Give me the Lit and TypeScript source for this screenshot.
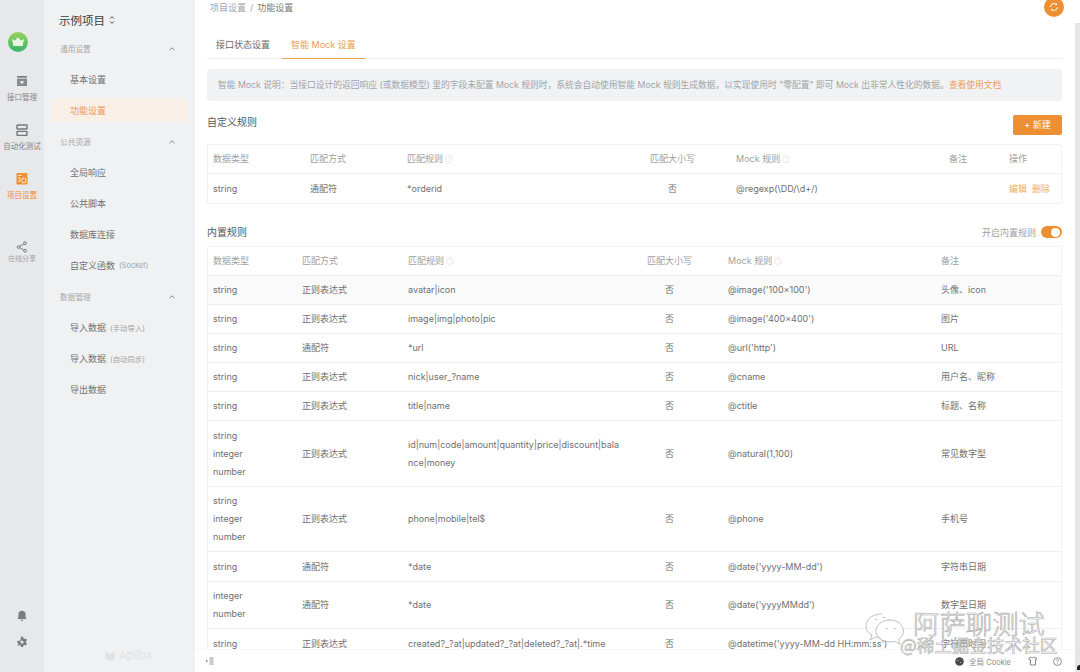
import { LitElement, html, css, svg } from "lit";
import { customElement } from "lit/decorators.js";

const ORANGE = "#ee8f33";

const info = html`<svg class="info" viewBox="0 0 8 8" width="8" height="8"><circle cx="4" cy="4" r="3.4" fill="none" stroke="#e2e2e2" stroke-width=".8" /><path d="M3.2 3.2a.8.8 0 1 1 1.2.7c-.3.2-.4.3-.4.6M4 5.6v.4" fill="none" stroke="#e2e2e2" stroke-width=".6" /></svg>`;

const chevron = html`<svg class="chev" viewBox="0 0 8 6" width="8" height="6"><path d="M1.5 4.2 4 1.8l2.5 2.4" fill="none" stroke="#888" stroke-width="1" /></svg>`;

const groups = [
  { label: "通用设置", items: [{ t: "基本设置" }, { t: "功能设置", on: true }] },
  { label: "公共资源", items: [{ t: "全局响应" }, { t: "公共脚本" }, { t: "数据库连接" }, { t: "自定义函数", s: "(Socket)" }] },
  { label: "数据管理", items: [{ t: "导入数据", s: "(手动导入)" }, { t: "导入数据", s: "(自动同步)" }, { t: "导出数据" }] },
];

const REGEX = "正则表达式";
const rows = [
  { h: 29, type: "string", how: REGEX, rule: "avatar|icon", mock: "@image('100x100')", note: "头像、icon", hover: true },
  { h: 29, type: "string", how: REGEX, rule: "image|img|photo|pic", mock: "@image('400x400')", note: "图片" },
  { h: 29, type: "string", how: "通配符", rule: "*url", mock: "@url('http')", note: "URL" },
  { h: 29, type: "string", how: REGEX, rule: "nick|user_?name", mock: "@cname", note: "用户名、昵称" },
  { h: 29, type: "string", how: REGEX, rule: "title|name", mock: "@ctitle", note: "标题、名称" },
  { h: 66, type: "string\ninteger\nnumber", how: REGEX, rule: "id|num|code|amount|quantity|price|discount|bala\nnce|money", mock: "@natural(1,100)", note: "常见数字型" },
  { h: 65, type: "string\ninteger\nnumber", how: REGEX, rule: "phone|mobile|tel$", mock: "@phone", note: "手机号" },
  { h: 30, type: "string", how: "通配符", rule: "*date", mock: "@date('yyyy-MM-dd')", note: "字符串日期" },
  { h: 47, type: "integer\nnumber", how: "通配符", rule: "*date", mock: "@date('yyyyMMdd')", note: "数字型日期" },
  { h: 29, type: "string", how: REGEX, rule: "created?_?at|updated?_?at|deleted?_?at|.*time", mock: "@datetime('yyyy-MM-dd HH:mm:ss')", note: "字符串时间" },
];

@customElement("app-root")
export class AppRoot extends LitElement {
  static styles = css`
    :host {
      display: block;
      width: 1080px;
      height: 672px;
      position: relative;
      overflow: hidden;
      background: #fff;
      font-family: Inter, "Noto Sans CJK SC", sans-serif;
      font-size: 9px;
      color: #6f6f6f;
    }
    .app { display: flex; height: 100%; }

    .rail {
      width: 44px;
      flex: none;
      background: #e7e8ea;
      display: flex;
      flex-direction: column;
      align-items: center;
      padding-top: 32px;
      box-sizing: border-box;
      font-size: 7.5px;
    }
    .logo { display: block; margin-left: -9px; margin-bottom: 23px; }
    .rail-item {
      display: flex;
      flex-direction: column;
      align-items: center;
      height: 29px;
      margin-bottom: 20px;
      white-space: nowrap;
      line-height: 12px;
      color: #868686;
    }
    .rail-item svg { margin-bottom: 5px; display: block; }
    .rail-item.on { color: ${css([ORANGE] as unknown as TemplateStringsArray)}; }
    .rail-item.share { margin-top: 19px; color: #a5a5a5; font-size: 7px; }
    .rail-item.share svg { margin-bottom: 0; }
    .rail-bottom { margin-top: auto; padding-bottom: 24px; display: flex; flex-direction: column; gap: 14px; }
    .rail-bottom svg { display: block; }

    .side {
      width: 151px;
      flex: none;
      box-sizing: border-box;
      background: #f0f1f3;
      padding: 7px 8px 0;
      display: flex;
      flex-direction: column;
    }
    .title {
      height: 26px;
      display: flex;
      align-items: center;
      gap: 4px;
      padding-left: 7px;
      font-size: 11.5px;
      color: #3d3d3d;
    }
    .group {
      height: 31px;
      display: flex;
      align-items: center;
      justify-content: space-between;
      padding: 0 11px 0 8px;
      font-size: 7.7px;
      color: #a8a8a8;
    }
    .item {
      height: 31px;
      display: flex;
      align-items: center;
      gap: 4px;
      padding-left: 18px;
      color: #727272;
      white-space: nowrap;
    }
    .item small { font-size: 7.4px; color: #a3a3a3; }
    .item.on { color: #ee9d55; position: relative; z-index: 0; }
    .item.on::before {
      content: "";
      position: absolute;
      inset: 3px 0 4px;
      border-radius: 3px;
      background: #f8efe6;
      z-index: -1;
    }
    .brand {
      margin-top: auto;
      margin-bottom: 10px;
      display: flex;
      align-items: center;
      justify-content: center;
      gap: 3px;
      padding-left: 17px;
      font-size: 11px;
      color: #e0e1e3;
    }

    .main { flex: 1; min-width: 0; display: flex; flex-direction: column; }
    .content { flex: 1; min-height: 0; overflow: hidden; padding: 0 18px 0 12px; }
    .crumb { height: 16px; line-height: 16px; padding-left: 3px; color: #a5a5a5; }
    .crumb b { font-weight: 400; color: #7a7a7a; }
    .crumb i { font-style: normal; margin: 0 4px; }

    .tabs { display: flex; gap: 3px; height: 42px; align-items: flex-end; border-bottom: 1px solid #f1f1f1; box-sizing: content-box; }
    .tab { height: 28px; line-height: 29px; padding: 0 9px; box-sizing: border-box; color: #6a6a6a; white-space: nowrap; }
    .tab.on { color: #ee9d55; border-bottom: 1px solid #ee9d55; height: 29px; margin-bottom: -1px; }

    .notice {
      margin-top: 10px;
      height: 32px;
      line-height: 32px;
      border-radius: 3px;
      background: #f0f2f4;
      padding: 0 11px;
      font-size: 8.75px;
      color: #a2a5a8;
      white-space: nowrap;
      overflow: hidden;
    }
    .notice a { color: #ee9d55; }

    .head { display: flex; justify-content: space-between; align-items: flex-start; margin-top: 14px; height: 20px; }
    .head h3 { margin: 0; font-weight: 400; font-size: 10px; line-height: 14px; color: #555; }
    .add {
      width: 49px;
      height: 20px;
      border-radius: 2px;
      background: #ee8f33;
      color: #fff;
      text-align: center;
      line-height: 20px;
    }
    .head.second { margin-top: 20px; height: 16px; align-items: center; }
    .head.second h3 { line-height: 16px; }
    .switch-row { display: flex; align-items: center; gap: 5px; color: #a3a3a3; }
    .switch { width: 21px; height: 12px; border-radius: 6px; background: #ee8f33; position: relative; }
    .switch::after {
      content: "";
      position: absolute;
      right: 2px;
      top: 1.5px;
      width: 9px;
      height: 9px;
      border-radius: 50%;
      background: #fff;
    }

    table {
      width: 100%;
      table-layout: fixed;
      border-collapse: separate;
      border-spacing: 0;
      border: 1px solid #f1f1f1;
      border-radius: 2px;
      box-sizing: border-box;
    }
    table.custom { margin-top: 9px; }
    table.builtin { margin-top: 6px; }
    th, td {
      padding: 0 0 0 5px;
      border-bottom: 1px solid #f0f0f0;
      height: 29px;
      box-sizing: border-box;
      font-weight: 400;
      text-align: left;
      line-height: 18px;
      white-space: pre-line;
    }
    tr:last-child td { border-bottom: 0; }
    th { color: #a0a0a0; }
    .case { display: inline-block; width: 45px; text-align: center; white-space: nowrap; }
    .info { vertical-align: -1px; margin-left: 2px; }
    tr.hover td { background: #fafafa; }
    .ops { color: #f0ab6b; }
    .ops span + span { margin-left: 5px; }

    .foot {
      height: 23px;
      flex: none;
      background: #fff;
      border-top: 1px solid #f6f6f6;
      box-sizing: border-box;
      display: flex;
      align-items: center;
      padding: 0 18px 0 11px;
      font-size: 7.5px;
      color: #8a8a8a;
      gap: 3px;
    }
    .foot svg { display: block; }
    .foot .cookie { margin-left: auto; }
    .foot .shirt { margin-left: 14px; }
    .foot .help { margin-left: 13px; }

    .sync {
      position: absolute;
      left: 1044px;
      top: -3px;
      width: 20px;
      height: 20px;
      border-radius: 50%;
      background: #ee8f33;
      display: flex;
      align-items: center;
      justify-content: center;
    }
    .scroll { position: absolute; right: 0; top: 23px; bottom: 0; width: 5px; background: #e6e6e6; }
    .corner { position: absolute; right: 0; bottom: 2px; width: 3px; height: 5px; background: #222; border-radius: 3px 0 0 0; }

    .mark { position: absolute; left: 864px; top: 608px; width: 200px; height: 50px; pointer-events: none; }
    .mark svg { position: absolute; left: 0; top: 0; }
    .mark div {
      position: absolute;
      white-space: nowrap;
      color: rgba(255, 255, 255, .75);
      -webkit-text-stroke: .6px #a9a9a9;
      font-family: "Noto Sans CJK SC", sans-serif;
    }
    .mark .a { left: 49px; top: -1px; font-size: 26.4px; line-height: 32px; font-weight: 300; }
    .mark .b { left: 36px; top: 26px; font-size: 17.6px; line-height: 22px; }
  `;

  railIcons = {
    api: svg`<rect x="1" y="1" width="10" height="1.6" fill="#777"/><rect x="1" y="3.6" width="10" height="7.4" fill="#8a8a8a"/><rect x="4.5" y="6" width="3" height="2.4" fill="#e7e8ea"/>`,
    test: svg`<rect x="1" y="1" width="10" height="4" rx=".6" fill="none" stroke="#777" stroke-width="1.4"/><rect x="1" y="7.4" width="10" height="4" rx=".6" fill="none" stroke="#777" stroke-width="1.4"/>`,
    proj: svg`<rect x=".5" y="0" width="11" height="11.5" rx="1" fill="#ee8f33"/><path d="M2 2.4h4M2 5h2v3.2H2M6 5.4h3.6v4.2H6z" fill="none" stroke="#fbe3c9" stroke-width="1"/>`,
    share: svg`<g fill="none" stroke="#6f6f6f" stroke-width=".9"><circle cx="9" cy="2.2" r="1.4"/><circle cx="2.6" cy="6" r="1.4"/><circle cx="9" cy="9.8" r="1.4"/><path d="M3.9 5.2 7.7 3M3.9 6.8l3.8 2.2"/></g>`,
  };

  renderRail() {
    const icon = (s: unknown) => html`<svg viewBox="0 0 12 12" width="12" height="12">${s}</svg>`;
    return html`<nav class="rail">
      <svg class="logo" viewBox="0 0 20 20" width="20" height="20">
        <defs><linearGradient id="lg" x1="0" y1="0" x2="0" y2="1"><stop offset="0" stop-color="#9ad35a" /><stop offset="1" stop-color="#35b46a" /></linearGradient></defs>
        <circle cx="10" cy="10" r="10" fill="url(#lg)" />
        <path d="M4 7l3.2 1.6L10 5l2.8 3.6L16 7l-1.4 7H5.4z" fill="#e8f3e2" />
      </svg>
      <div class="rail-item">${icon(this.railIcons.api)}接口管理</div>
      <div class="rail-item">${icon(this.railIcons.test)}自动化测试</div>
      <div class="rail-item on">${icon(this.railIcons.proj)}项目设置</div>
      <div class="rail-item share">${icon(this.railIcons.share)}在线分享</div>
      <div class="rail-bottom">
        <svg viewBox="0 0 12 12" width="12" height="12"><path d="M6 .8a3.6 3.6 0 0 0-3.6 3.6v2.8L1.4 9h9.2l-1-1.8V4.4A3.6 3.6 0 0 0 6 .8zM4.8 9.8a1.2 1.2 0 0 0 2.4 0z" fill="#7c7c7c" /></svg>
        <svg viewBox="0 0 12 12" width="12" height="12"><path d="M4.9.8h2.2l.3 1.5 1 .6 1.5-.5 1.1 1.9-1.1 1v1.2l1.1 1-1.1 1.9-1.5-.5-1 .6-.3 1.5H4.9l-.3-1.5-1-.6-1.5.5L1 9.5l1.1-1V7.3L1 6.300 2.100 4.400l1.500.500 1-.600zM6 4.500a1.600 1.600 0 1 0 0 3.200 1.600 1.600 0 0 0 0-3.200z" fill="#7c7c7c" fill-rule="evenodd" /></svg>
      </div>
    </nav>`;
  }

  renderSide() {
    return html`<aside class="side">
      <div class="title">示例项目
        <svg viewBox="0 0 6 10" width="6" height="10"><path d="M1 3.600 3 1.600l2 2M1 6.400l2 2 2-2" fill="none" stroke="#444" stroke-width=".9" /></svg>
      </div>
      ${groups.map(
        (g) => html`<div class="group">${g.label}${chevron}</div>
          ${g.items.map(
            (i: { t: string; s?: string; on?: boolean }) =>
              html`<div class="item ${i.on ? "on" : ""}">${i.t}${i.s ? html`<small>${i.s}</small>` : ""}</div>`
          )}`
      )}
      <div class="brand">
        <svg viewBox="0 0 12 12" width="12" height="12"><path d="M1 2.500c1.500 1.500 3 2 5 2s3.500-.5 5-2v4.500a5 5 0 0 1-10 0z" fill="#e0e1e3" /></svg>
        Apifox
      </div>
    </aside>`;
  }

  renderCustom() {
    return html`<table class="custom">
      <colgroup><col style="width:97px" /><col style="width:97px" /><col style="width:243px" /><col style="width:86px" /><col style="width:213px" /><col style="width:60px" /><col /></colgroup>
      <tr><th>数据类型</th><th>匹配方式</th><th>匹配规则${info}</th><th><span class="case">匹配大小写</span></th><th>Mock 规则${info}</th><th>备注</th><th>操作</th></tr>
      <tr><td>string</td><td>通配符</td><td>*orderid</td><td><span class="case">否</span></td><td>@regexp(\\DD/\\d+/)</td><td></td><td class="ops"><span>编辑</span><span>删除</span></td></tr>
    </table>`;
  }

  renderBuiltin() {
    return html`<table class="builtin">
      <colgroup><col style="width:89px" /><col style="width:106px" /><col style="width:239px" /><col style="width:81px" /><col style="width:213px" /><col /></colgroup>
      <tr><th>数据类型</th><th>匹配方式</th><th>匹配规则${info}</th><th><span class="case">匹配大小写</span></th><th>Mock 规则${info}</th><th>备注</th></tr>
      ${rows.map(
        (r) => html`<tr class=${r.hover ? "hover" : ""} style="height:${r.h}px">
          <td>${r.type}</td><td>${r.how}</td><td>${r.rule}</td><td><span class="case">否</span></td><td>${r.mock}</td><td>${r.note}</td>
        </tr>`
      )}
    </table>`;
  }

  render() {
    return html`<div class="app">
        ${this.renderRail()} ${this.renderSide()}
        <main class="main">
          <div class="content">
            <div class="crumb">项目设置<i>/</i><b>功能设置</b></div>
            <div class="tabs"><div class="tab">接口状态设置</div><div class="tab on">智能 Mock 设置</div></div>
            <div class="notice">智能 Mock 说明：当接口设计的返回响应 (或数据模型) 里的字段未配置 Mock 规则时，系统会自动使用智能 Mock 规则生成数据，以实现使用时 "零配置" 即可 Mock 出非常人性化的数据。<a>查看使用文档</a></div>
            <div class="head"><h3>自定义规则</h3><div class="add">+ 新建</div></div>
            ${this.renderCustom()}
            <div class="head second"><h3>内置规则</h3><div class="switch-row">开启内置规则<div class="switch"></div></div></div>
            ${this.renderBuiltin()}
          </div>
          <footer class="foot">
            <svg viewBox="0 0 8 8" width="8" height="8"><path d="M3.500 1h4M3.500 3h4M3.500 5h4M3.500 7h4" stroke="#888" stroke-width=".9" /><path d="M0 2.500 2 4 0 5.500z" fill="#888" /></svg>
            <svg class="cookie" viewBox="0 0 9 9" width="9" height="9"><circle cx="4.500" cy="4.500" r="4.300" fill="#4a4a4a" /><circle cx="3" cy="3.500" r=".6" fill="#ccc" /><circle cx="5.800" cy="5.500" r=".6" fill="#ccc" /></svg>
            <span>&nbsp;全局 Cookie</span>
            <svg class="shirt" viewBox="0 0 9 10" width="9" height="10"><path d="M2.800 1 .8 2.400l.7 1.600 1-.3V9h5V3.700l1 .3.700-1.600L6.200 1c-.3 1-3.100 1-3.400 0z" fill="none" stroke="#666" stroke-width=".8" /></svg>
            <svg class="help" viewBox="0 0 9 9" width="9" height="9"><circle cx="4.500" cy="4.500" r="3.900" fill="none" stroke="#666" stroke-width=".7" /><path d="M3.400 3.500a1.100 1.100 0 1 1 1.700.9c-.4.300-.6.500-.6.900M4.500 6.200v.5" fill="none" stroke="#666" stroke-width=".7" /></svg>
          </footer>
        </main>
      </div>
      <div class="sync">
        <svg viewBox="0 0 10 10" width="10" height="10"><path d="M1.500 5a3.500 3.500 0 0 1 6-2.400M8.500 5a3.500 3.500 0 0 1-6 2.400" fill="none" stroke="#fff" stroke-width="1" /><path d="M7.900 .9v2.200H5.700zM2.100 9.100V6.900h2.200z" fill="#fff" /></svg>
      </div>
      <div class="scroll"></div>
      <div class="corner"></div>
      <div class="mark">
        <svg viewBox="0 0 44 40" width="44" height="40" fill="none" stroke="#b0b0b0" stroke-width=".8">
          <path d="M18 6C9 6 2 11 2 18c0 4 2 7 6 9l-2 5 6-3c2 .5 3 .7 5 .7" fill="rgba(255,255,255,.4)" />
          <path d="M26 12c-8 0-14 5-14 11s6 11 14 11c2 0 3-.2 5-.7l5 3-1.500-5c3-2 5-5 5-8.300 0-6-6-11-14-11z" fill="rgba(255,255,255,.5)" />
          <path d="M22 21a1.200 1.200 0 0 1 2 0M30 21a1.200 1.200 0 0 1 2 0M11 12a1 1 0 0 1 2 0M19 10a1 1 0 0 1 2 0" />
        </svg>
        <div class="a">阿萨聊测试</div>
        <div class="b">@稀土掘金技术社区</div>
      </div>`;
  }
}
